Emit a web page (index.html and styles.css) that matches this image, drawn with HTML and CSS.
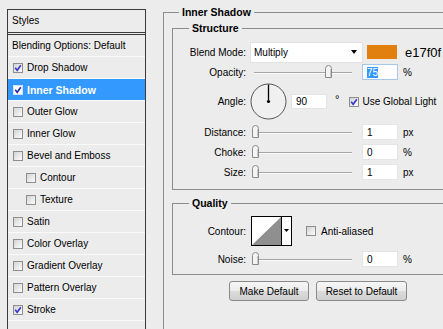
FILE: index.html
```html
<!DOCTYPE html>
<html>
<head>
	<title>Layer Style - Inner Shadow</title>
	<link rel="stylesheet" href="styles.css">
</head>
<body>
	<div class="dialog">
		<div class="styles-list">
			<div class="list-title">Styles</div>
			<div class="list-item plain">Blending Options: Default</div>
			<div class="list-item"><span class="check"><svg viewBox="0 0 8 8"><path d="M1.2 3.8 L3.2 6.3 L6.8 1.2" fill="none" stroke="#3a3ac8" stroke-width="1.6"/></svg></span>Drop Shadow</div>
			<div class="list-item selected"><span class="check"><svg viewBox="0 0 8 8"><path d="M1.2 3.8 L3.2 6.3 L6.8 1.2" fill="none" stroke="#2a2aa8" stroke-width="1.6"/></svg></span>Inner Shadow</div>
			<div class="list-item"><span class="check"></span>Outer Glow</div>
			<div class="list-item"><span class="check"></span>Inner Glow</div>
			<div class="list-item"><span class="check"></span>Bevel and Emboss</div>
			<div class="list-item sub-item"><span class="check"></span>Contour</div>
			<div class="list-item sub-item"><span class="check"></span>Texture</div>
			<div class="list-item"><span class="check"></span>Satin</div>
			<div class="list-item"><span class="check"></span>Color Overlay</div>
			<div class="list-item"><span class="check"></span>Gradient Overlay</div>
			<div class="list-item"><span class="check"></span>Pattern Overlay</div>
			<div class="list-item"><span class="check"><svg viewBox="0 0 8 8"><path d="M1.2 3.8 L3.2 6.3 L6.8 1.2" fill="none" stroke="#3a3ac8" stroke-width="1.6"/></svg></span>Stroke</div>
		</div>

		<div class="panel">
			<fieldset class="group">
				<legend>Inner Shadow</legend>

				<fieldset class="group-sub">
					<legend>Structure</legend>
					<div class="row row-blend">
						<span class="label">Blend Mode:</span>
						<div class="select">Multiply<span class="arrow"></span></div>
						<span class="swatch"></span>
						<span class="hex">e17f0f</span>
					</div>
					<div class="row row-opacity">
						<span class="label">Opacity:</span>
						<div class="slider"><span class="thumb" style="left:73px"><svg width="7" height="13" viewBox="0 0 7 13"><path d="M0.5 12.5 V3.5 Q0.5 0.5 3.5 0.5 Q6.5 0.5 6.5 3.5 V12.5 Z" fill="#f4f4f4" stroke="#8a8a8a"/><path d="M5.5 4 V11.5" stroke="#c4c4c4"/></svg></span></div>
						<div class="field focused"><span class="selection">75</span></div>
						<span class="unit">%</span>
					</div>
					<div class="row row-angle">
						<span class="label">Angle:</span>
						<svg class="dial" width="37" height="37" viewBox="0 0 37 37"><circle cx="18.5" cy="18.5" r="17.5" fill="#f0f0f0" stroke="#555"/><path d="M18.5 18.5 V1.5" stroke="#000" stroke-width="1.3"/><circle cx="18.5" cy="18.5" r="1.6" fill="#000"/></svg>
						<div class="field angle-field">90</div>
						<span class="deg">°</span>
						<span class="check global"><svg viewBox="0 0 8 8"><path d="M1.2 3.8 L3.2 6.3 L6.8 1.2" fill="none" stroke="#3a3ac8" stroke-width="1.6"/></svg></span>
						<span class="check-label">Use Global Light</span>
					</div>
					<div class="row row-slider">
						<span class="label">Distance:</span>
						<div class="slider"><span class="thumb" style="left:0"><svg width="7" height="13" viewBox="0 0 7 13"><path d="M0.5 12.5 V3.5 Q0.5 0.5 3.5 0.5 Q6.5 0.5 6.5 3.5 V12.5 Z" fill="#f4f4f4" stroke="#8a8a8a"/><path d="M5.5 4 V11.5" stroke="#c4c4c4"/></svg></span></div>
						<div class="field">1</div>
						<span class="unit">px</span>
					</div>
					<div class="row row-slider">
						<span class="label">Choke:</span>
						<div class="slider"><span class="thumb" style="left:0"><svg width="7" height="13" viewBox="0 0 7 13"><path d="M0.5 12.5 V3.5 Q0.5 0.5 3.5 0.5 Q6.5 0.5 6.5 3.5 V12.5 Z" fill="#f4f4f4" stroke="#8a8a8a"/><path d="M5.5 4 V11.5" stroke="#c4c4c4"/></svg></span></div>
						<div class="field">0</div>
						<span class="unit">%</span>
					</div>
					<div class="row row-slider">
						<span class="label">Size:</span>
						<div class="slider"><span class="thumb" style="left:0"><svg width="7" height="13" viewBox="0 0 7 13"><path d="M0.5 12.5 V3.5 Q0.5 0.5 3.5 0.5 Q6.5 0.5 6.5 3.5 V12.5 Z" fill="#f4f4f4" stroke="#8a8a8a"/><path d="M5.5 4 V11.5" stroke="#c4c4c4"/></svg></span></div>
						<div class="field">1</div>
						<span class="unit">px</span>
					</div>
				</fieldset>

				<fieldset class="group-sub quality">
					<legend>Quality</legend>
					<div class="row row-contour">
						<span class="label">Contour:</span>
						<svg class="contour" width="41" height="30" viewBox="0 0 41 30"><rect x="0.5" y="0.5" width="40" height="29" fill="#fff" stroke="#000"/><path d="M1 29 L30 1 L30 29 Z" fill="#8f8f8f"/><path d="M30.5 0 V30" stroke="#000"/><path d="M33 13 H38 L35.5 16 Z" fill="#000"/></svg>
						<span class="check anti"></span>
						<span class="check-label">Anti-aliased</span>
					</div>
					<div class="row row-noise">
						<span class="label">Noise:</span>
						<div class="slider"><span class="thumb" style="left:0"><svg width="7" height="13" viewBox="0 0 7 13"><path d="M0.5 12.5 V3.5 Q0.5 0.5 3.5 0.5 Q6.5 0.5 6.5 3.5 V12.5 Z" fill="#f4f4f4" stroke="#8a8a8a"/><path d="M5.5 4 V11.5" stroke="#c4c4c4"/></svg></span></div>
						<div class="field">0</div>
						<span class="unit">%</span>
					</div>
				</fieldset>

				<div class="buttons">
					<button class="btn btn-make">Make Default</button>
					<button class="btn btn-reset">Reset to Default</button>
				</div>
			</fieldset>
		</div>
	</div>
</body>
</html>
```

FILE: styles.css
```css
body {
	background-color: #ececec;
	color: #000;
	font-family: "Liberation Sans", Arial, sans-serif;
	font-size: 10px;
	margin: 0;
	padding: 0;
	width: 443px;
	height: 329px;
	overflow: hidden;
}
.dialog {
	display: flex;
	align-items: flex-start;
	height: 329px;
}

/* left: list of styles */
.styles-list {
	flex: none;
	box-sizing: border-box;
	width: 139px;
	height: 320px;
	margin: 9px 0 0 7px;
	border: 1px solid #3a3a3a;
	border-bottom: 0;
	overflow: hidden;
}
.list-title {
	height: 22px;
	line-height: 22px;
	padding-left: 4px;
	border-bottom: 3px double #3a3a3a;
}
.list-item {
	display: flex;
	align-items: center;
	gap: 4px;
	height: 21px;
	padding-left: 5px;
	border-bottom: 1px solid #fafafa;
	white-space: nowrap;
}
.list-item.plain {
	padding-left: 4px;
}
.list-item.sub-item {
	padding-left: 18px;
}
.list-item.selected {
	background-color: #3399ff;
	color: #fff;
	font-weight: bold;
	font-size: 10.5px;
}
.check {
	flex: none;
	display: flex;
	align-items: center;
	justify-content: center;
	box-sizing: border-box;
	width: 10px;
	height: 10px;
	border: 1px solid #8e8e8e;
	background: linear-gradient(135deg, #d4d4d4, #fcfcfc);
}
.check svg {
	width: 8px;
	height: 8px;
}
.selected .check {
	background: #fff;
	border-color: #cfe2f7;
}

/* right: settings */
.panel {
	flex: none;
	width: 280px;
	margin: 6px 0 0 17px;
}
fieldset {
	margin: 0;
	padding: 0;
	min-width: 0;
	border: 1px solid #8c8c8c;
	border-right: 0;
}
legend {
	padding: 0 3px;
	font-size: 10.5px;
	font-weight: bold;
	line-height: 13px;
}
.group {
	box-sizing: border-box;
	height: 323px;
	padding-left: 8px;
	border-bottom: 0;
}
.group > legend {
	margin-left: 7px;
}
.group-sub {
	margin-top: 3px;
	padding: 6px 0 7px;
}
.group-sub > legend {
	margin-left: 16px;
}
.group-sub.quality {
	margin-top: 7px;
	padding: 6px 0 6px;
}
.row {
	display: flex;
	align-items: center;
	white-space: nowrap;
}
.label {
	flex: none;
	width: 73px;
	text-align: right;
}
.row-blend {
	height: 22px;
}
.row-opacity {
	height: 18px;
}
.row-angle {
	height: 41px;
}
.row-slider {
	height: 20px;
}
.row-contour {
	height: 30px;
}
.row-noise {
	height: 18px;
	margin-top: 4px;
}
.select {
	flex: none;
	display: flex;
	align-items: center;
	justify-content: space-between;
	box-sizing: border-box;
	width: 113px;
	height: 21px;
	margin-left: 4px;
	padding: 0 5px 0 3px;
	background-color: #fff;
	border: 1px solid #e2e2e2;
}
.arrow {
	width: 0;
	height: 0;
	border-left: 3px solid transparent;
	border-right: 3px solid transparent;
	border-top: 4px solid #000;
}
.swatch {
	flex: none;
	width: 30px;
	height: 14px;
	margin-left: 4px;
	background-color: #e17f0f;
}
.hex {
	margin-left: 8px;
	font-size: 13px;
}
.slider {
	flex: none;
	position: relative;
	width: 100px;
	height: 14px;
	margin-left: 6px;
}
.slider::before {
	content: "";
	position: absolute;
	left: 2px;
	right: 0;
	top: 7px;
	height: 1px;
	background-color: #a4a4a4;
	border-bottom: 1px solid #fbfbfb;
}
.thumb {
	position: absolute;
	top: 0;
	width: 7px;
	height: 13px;
}
.thumb svg {
	display: block;
}
.field {
	flex: none;
	display: flex;
	align-items: center;
	box-sizing: border-box;
	width: 36px;
	height: 16px;
	margin-left: 10px;
	padding-left: 4px;
	background-color: #fff;
	border: 1px solid #e4e4e4;
}
.field.focused {
	border-color: #a9c7ea;
}
.selection {
	background-color: #3399ff;
	color: #fff;
	line-height: 11px;
}
.unit {
	margin-left: 5px;
}
.dial {
	flex: none;
	margin-left: 4px;
}
.field.angle-field {
	height: 15px;
	margin-left: 4px;
}
.deg {
	margin-left: 8px;
	margin-bottom: 5px;
	font-size: 11px;
}
.check.global {
	margin-left: 10px;
}
.check-label {
	margin-left: 3px;
}
.contour {
	flex: none;
	margin-left: 5px;
}
.check.anti {
	margin-left: 14px;
}
.check.anti + .check-label {
	margin-left: 5px;
}
.buttons {
	display: flex;
	gap: 7px;
	margin: 6px 0 0 57px;
}
.btn {
	box-sizing: border-box;
	height: 20px;
	padding: 0;
	color: #000;
	font-family: "Liberation Sans", Arial, sans-serif;
	font-size: 10px;
	background: linear-gradient(#f6f6f6, #ececec 50%, #dcdcdc 50%, #d0d0d0);
	border: 1px solid #8a8a8a;
	border-radius: 3px;
}
.btn-make {
	width: 80px;
}
.btn-reset {
	width: 91px;
}
```
